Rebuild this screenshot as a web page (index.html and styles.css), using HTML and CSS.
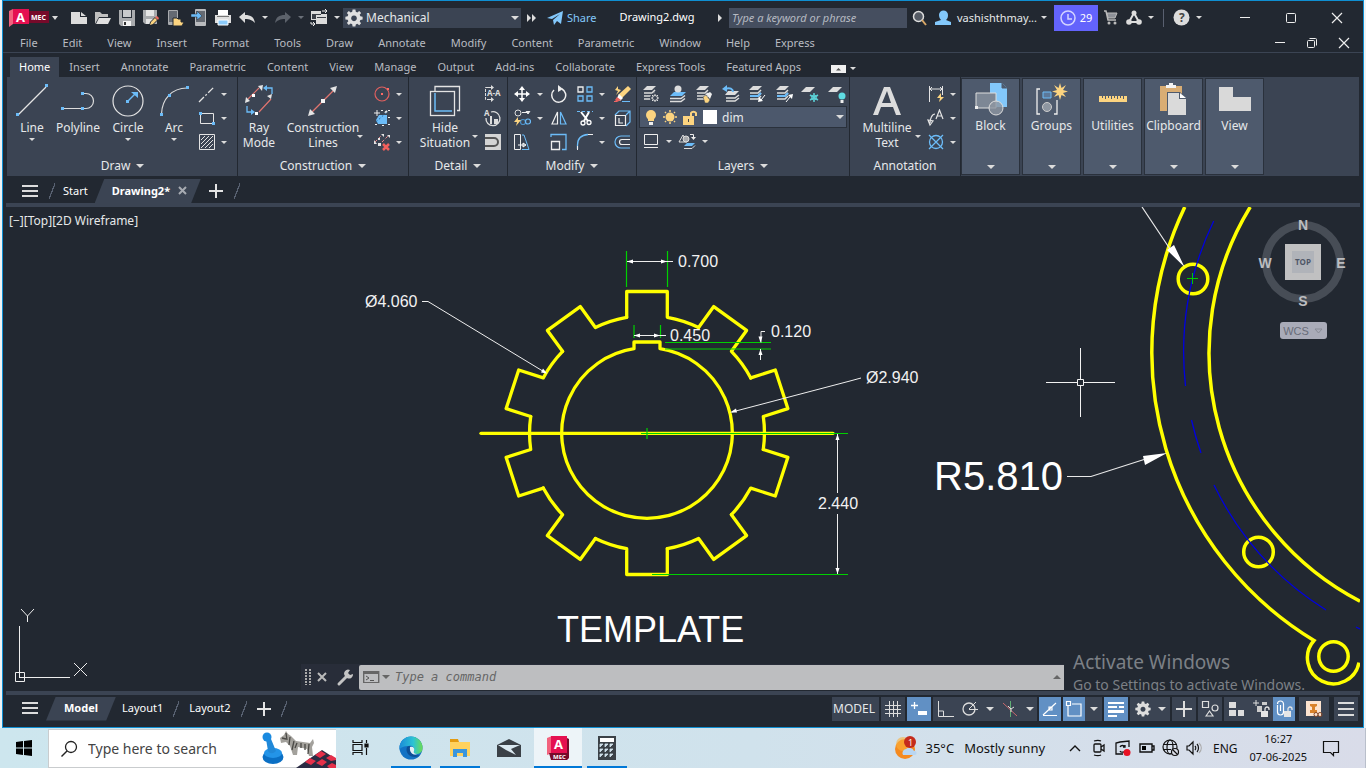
FILE: index.html
```html
<!DOCTYPE html>
<html lang="en">
<head>
<meta charset="utf-8">
<title>Drawing2.dwg</title>
<link rel="stylesheet" href="styles.css">
</head>
<body>
<svg class="defs" aria-hidden="true">
  <defs>
    <path id="tooth" d="M-20.3-115.7V-141.5H20.3V-115.7A117.5 117.5 0 0 1 51.6-105.5"/>
    <g id="stack"><path d="M5 1h9l-4 4H1z" fill="#dcdcdc"/><path d="M2 8h8l3-3M2 11h8l3-3M2 14h8l3-3" fill="none" stroke="#dcdcdc" stroke-width="1.5"/></g>
    <g id="padlock"><path d="M1 5h7v6H1z" fill="#e6e6e6"/><path d="M5 5V3a2 2 0 0 1 4 0v1" fill="none" stroke="#e6e6e6" stroke-width="1.3"/></g>
    <path id="cog" d="M8 0h3l.4 2.4 1.6.7 2-1.5 2 2-1.5 2 .7 1.6 2.4.4v3l-2.4.4-.7 1.6 1.5 2-2 2-2-1.5-1.6.7L11 18H8l-.4-2.4-1.6-.7-2 1.500-2-2 1.500-2-.7-1.600L.4 10.600v-3l2.400-.4.7-1.600-1.500-2 2-2 2 1.500 1.600-.7zM9.500 6.300a3 3 0 1 0 .01 0z" fill-rule="evenodd"/>
  </defs>
</svg>
<div class="desktop">
<main class="window">
  <header class="titlebar">
    <button class="applogo" aria-label="Application menu"><svg width="41" height="20"><path d="M0 3l4-2v15l-4 3z" fill="#f2627d"/><path d="M4 1h16v15H4z" fill="#e51050"/><path d="M20 3h20v12H20z" fill="#770a2a"/><text x="7" y="14" class="logo-a">A</text><text x="22" y="12" class="logo-m">MEC</text></svg></button>
    <span class="caret wide"></span>
    <div class="qat">
      <button aria-label="New"><svg width="18" height="16"><path d="M1 2h9v5h7v7H1z" fill="#dcdcdc"/><path d="M11 2l5 4h-5z" fill="#dcdcdc"/></svg></button>
      <button aria-label="Open"><svg width="18" height="16"><path d="M1 14V2h5l2 2h6v3H5z" fill="#bfbfbf"/><path d="M5 8h12l-3 6H2z" fill="#e0e0e0"/></svg></button>
      <button aria-label="Save"><svg width="18" height="18"><path d="M1 1h16v16H3l-2-2z" fill="#a9abae"/><path d="M4 1h10v8H4z" fill="#2b313a"/><path d="M5 1h8v7H5z" fill="#c9cacc"/><path d="M5 12h8v5H5z" fill="#f3f3f3"/><path d="M6 13h2v3H6z" fill="#333"/></svg></button>
      <button aria-label="Save as"><svg width="18" height="18"><path d="M1 1h14v14H3l-2-2z" fill="#a9abae"/><path d="M4 1h8v6H4zM4 10h7v5H4z" fill="#e5e5e5"/><path d="M7 17l1-4 5-5 3 3-5 5z" fill="#222830"/><path d="M8 16l1-3 4-4 2 2-4 4z" fill="#fcd480"/><path d="M13 8l2-1 2 2-1 2z" fill="#ee6a5f"/></svg></button>
      <button aria-label="Open from mobile"><svg width="18" height="18"><rect x="2" y="1" width="10" height="15" rx="1" fill="#a9abae"/><path d="M3 2h8v11H3z" fill="#656a72"/><path d="M7 17v-8h4l1 1h3v3h3l-2 4z" fill="#fcd480" stroke="#222830"/></svg></button>
      <button aria-label="Save to mobile"><svg width="18" height="18"><rect x="5" y="0" width="11" height="17" rx="1" fill="#b9bbbe"/><path d="M6 2h9v11H6z" fill="#656a72"/><path d="M1 5h6V2l5 5-5 4V8H1z" fill="#6cbcf8" stroke="#222830" stroke-width=".5"/></svg></button>
      <button aria-label="Plot"><svg width="18" height="18"><path d="M4 1h10v5H4z" fill="#fff"/><path d="M1 6h16v8H1z" fill="#dedede"/><path d="M3 7h12v1H3z" fill="#777"/><path d="M4 11h10v5H4z" fill="#8bcbfb" stroke="#fff"/></svg></button>
      <button aria-label="Undo"><svg width="18" height="14"><path d="M1 6l6-5v3c6 0 9 2 10 8-3-3-5-4-10-4v4z" fill="#dcdcdc"/></svg></button><span class="caret slot"></span>
      <button aria-label="Redo"><svg width="18" height="14"><path d="M17 6l-6-5v3C5 4 2 6 1 12c3-3 5-4 10-4v4z" fill="#5c626b"/></svg></button><span class="caret slot dim"></span>
      <button aria-label="Switch windows"><svg width="18" height="18"><path d="M1 2h10v3h6v10H6v-4H1z" fill="#dcdcdc"/><path d="M2 5h9v1H6v4H2zM7 8h9v1H7z" fill="#3b4048"/><path d="M12 2h4M15 0l2 2-2 2M1 13v2h4M3 13l2 2-2 2" fill="none" stroke="#eee"/></svg></button><span class="caret slot last"></span>
    </div>
    <label class="workspace"><svg width="18" height="18" viewBox="0 0 19 18"><use href="#cog" fill="#e0e0e0"/></svg><select aria-label="Workspace"><option>Mechanical</option></select><span class="caret wide"></span></label>
    <svg class="more" width="10" height="10"><path d="M0 1l4 4-4 4zM5 1l4 4-4 4z" fill="#ddd"/></svg>
    <button class="share"><svg width="16" height="14"><path d="M0 7L16 0l-2 13-4-3-3 4-1-5 7-6-8 5z" fill="#83c8fb"/></svg>Share</button>
    <h1 class="doctitle">Drawing2.dwg</h1>
    <div class="tools">
      <svg class="tri" width="5" height="8"><path d="M0 0l4 4-4 4z" fill="#ddd"/></svg>
      <input class="search" type="text" aria-label="Search help" placeholder="Type a keyword or phrase">
      <button class="w26" aria-label="Search"><svg width="16" height="16"><circle cx="6.500" cy="6.500" r="5" fill="#555b65" stroke="#ddd" stroke-width="1.500"/><path d="M10 10l4 5" stroke="#d8a868" stroke-width="2"/></svg></button>
      <button class="user"><svg width="17" height="16"><path d="M4 5a4 4 0 0 1 9 0c0 3-1 4-2 5l5 2v3H0v-3l6-2C5 9 4 7 4 5z" fill="#83c8fb"/></svg>vashishthmay...<span class="caret"></span></button>
      <button class="trial"><svg width="16" height="16"><circle cx="8" cy="8" r="7" fill="none" stroke="#d4d4ff" stroke-width="1.500"/><path d="M8 4v5h4" fill="none" stroke="#d4d4ff" stroke-width="1.500"/></svg>29</button>
      <button class="w26" aria-label="Cart"><svg width="14" height="15"><path d="M0 1h2l2 9h8" fill="none" stroke="#bbb" stroke-width="1.500"/><path d="M3 3h10l-2 5H4z" fill="#8d9198" stroke="#bbb"/><circle cx="5" cy="13" r="1.500" fill="#bbb"/><circle cx="11" cy="13" r="1.500" fill="#bbb"/></svg></button>
      <button class="autodesk" aria-label="Autodesk apps"><svg width="16" height="16"><path d="M8 3L3 12h10z" fill="none" stroke="#ddd" stroke-width="2"/><circle cx="8" cy="3" r="2.500" fill="#ddd"/><circle cx="3" cy="12" r="2.800" fill="#ddd"/><circle cx="13" cy="12" r="2.800" fill="#ddd"/></svg><span class="caret"></span></button>
      <i class="rule"></i>
      <button class="help" aria-label="Help"><svg width="17" height="17"><circle cx="8.500" cy="8.500" r="8" fill="#dcdcdc"/><text x="6" y="13" class="qmark">?</text></svg><span class="caret"></span></button>
      <div class="wincontrols">
        <button aria-label="Minimize"><svg width="12" height="12"><path d="M1 5.500h10" stroke="#eee"/></svg></button>
        <button aria-label="Maximize"><svg width="12" height="12"><rect x="1.500" y="1.500" width="9" height="9" rx="1" fill="none" stroke="#eee"/></svg></button>
        <button aria-label="Close"><svg width="12" height="12"><path d="M1 1l10 10M11 1L1 11" stroke="#eee" stroke-width="1.200"/></svg></button>
      </div>
    </div>
  </header>

  <nav class="menubar">
    <button>File</button><button>Edit</button><button>View</button><button>Insert</button><button>Format</button><button>Tools</button><button>Draw</button><button>Annotate</button><button>Modify</button><button>Content</button><button>Parametric</button><button>Window</button><button>Help</button><button>Express</button>
    <div class="doccontrols">
      <button aria-label="Minimize drawing"><svg width="12" height="12"><path d="M1 5.500h10" stroke="#eee"/></svg></button>
      <button aria-label="Restore drawing"><svg width="12" height="12"><rect x="1.500" y="3.500" width="7" height="7" rx="1" fill="none" stroke="#eee"/><path d="M3.500 1.500h6a1 1 0 0 1 1 1v6" fill="none" stroke="#eee"/></svg></button>
      <button aria-label="Close drawing"><svg width="12" height="12"><path d="M1 1l10 10M11 1L1 11" stroke="#eee" stroke-width="1.200"/></svg></button>
    </div>
  </nav>

  <nav class="ribbontabs">
    <button class="on">Home</button><button>Insert</button><button>Annotate</button><button>Parametric</button><button>Content</button><button>View</button><button>Manage</button><button>Output</button><button>Add-ins</button><button>Collaborate</button><button>Express Tools</button><button>Featured Apps</button>
    <span class="minimize"><svg width="15" height="8"><path d="M0 0h15v8H0z" fill="#f0f0f0"/><path d="M5 5.500h5L7.500 3z" fill="#555"/></svg><span class="caret"></span></span>
  </nav>

  <section class="ribbon">
    <div class="panel draw">
      <div class="body">
        <button class="big w48"><svg width="34" height="34"><path d="M3 31L31 3" stroke="#e4e4e4" stroke-width="1.200"/><path d="M1 29h3v3H1zM30 0h3v3h-3z" fill="#6cbcf8"/></svg>Line<span class="caret"></span></button>
        <button class="big w44"><svg width="34" height="34"><path d="M2 24.500h20M22 9.500h3a7.500 7.500 0 0 1 0 15h-3" fill="none" stroke="#dcdcdc" stroke-width="1.200"/><path d="M0 23h3v3H0zM20 23h3v3h-3zM20 8h3v3h-3z" fill="#6cbcf8"/></svg>Polyline</button>
        <button class="big w56"><svg width="34" height="34"><circle cx="17" cy="17" r="15" fill="none" stroke="#e4e4e4" stroke-width="1.200"/><path d="M17 17l7-7" stroke="#6cbcf8" stroke-width="1.500"/><path d="M15 16h3v3h-3zM20 8h7v6z" fill="#6cbcf8"/></svg>Circle<span class="caret"></span></button>
        <button class="big w36"><svg width="34" height="34"><path d="M4.500 30C5 15 15 4 30 4" fill="none" stroke="#dcdcdc" stroke-width="1.200"/><path d="M3 29h3v3H3zM11 10h3v3h-3zM29 2h3v3h-3z" fill="#6cbcf8"/></svg>Arc<span class="caret"></span></button>
        <div class="grid2 push">
          <button aria-label="Centerline"><svg width="18" height="18"><path d="M1 17L16 2" stroke="#e4e4e4" stroke-width="1.300" stroke-dasharray="7 2 2 2"/></svg></button><span class="caret"></span>
          <button aria-label="Rectangle"><svg width="18" height="18"><path d="M2.500 4.500h13v10h-13z" fill="none" stroke="#e4e4e4"/><path d="M1 3h3v3H1zM14 13h3v3h-3z" fill="#6cbcf8"/></svg></button><span class="caret"></span>
          <button aria-label="Hatch"><svg width="18" height="18"><path d="M1.500 1.500h15v15h-15z" fill="none" stroke="#e4e4e4"/><path d="M3 7l4-4M3 11l8-8M3 15L15 3M7 15l8-8M11 15l4-4" stroke="#e4e4e4"/></svg></button><span class="caret"></span>
        </div>
      </div>
      <div class="name">Draw<span class="caret wide"></span></div>
    </div>

    <div class="panel constr">
      <div class="body">
        <button class="big w44"><svg width="34" height="34"><path d="M6 15L17 4M17 28l12-13" stroke="#e0746f" stroke-width="1.200"/><path d="M3 19l1-6 4 4zM16 2l5-1-1 6zM30 10l-5 2 4 3z" fill="#e4e4e4"/><path d="M10 10h3v3h-3zM13 28h3v3h-3z" fill="#fff"/><path d="M23 4h7v6M5 22v6h6" fill="none" stroke="#6cbcf8" stroke-width="1.300"/><path d="M21 4l4-3v6zM13 28l-4-3v6z" fill="#6cbcf8"/></svg>Ray<br>Mode</button>
        <button class="big w86"><svg width="34" height="34"><path d="M6 28L28 6" stroke="#e0746f" stroke-width="1.300"/><path d="M2 32l2-7 5 5zM31 2l-7 2 5 5z" fill="#e4e4e4"/><path d="M15 15h4v4h-4z" fill="#f4f4f4"/></svg>Construction<br>Lines<span class="caret side"></span></button>
        <div class="grid2">
          <button aria-label="Construction circle"><svg width="18" height="18"><circle cx="9" cy="9" r="7" fill="none" stroke="#e0605f" stroke-width="1.200"/><path d="M8 8h2v2H8zM14 3h2v2h-2z" fill="#ff6a66"/></svg></button><span class="caret"></span>
          <button aria-label="Automatic construction lines"><svg width="18" height="18"><path d="M6 6h8v9H5l-2-4z" fill="#6cbcf8"/><path d="M1 4h6M4 1v6" stroke="#eee"/><path d="M9 1v1M14 2l-2 2M16 1v1M16 8v1M16 15v1M10 17v-1M3 16v-1" stroke="#eee" stroke-width="2"/><path d="M3 13L15 2" stroke="#2b6fa8" stroke-dasharray="2 2"/></svg></button><span class="caret"></span>
          <button aria-label="Delete construction lines"><svg width="18" height="18"><path d="M2 9l8-8M9 9l6-6" stroke="#e88" stroke-dasharray="3 2"/><path d="M1 7v4h3zM8 1h3v3zM14 2h3v3zM5 10h3v3H5zM5 5h2v2H5z" fill="#e4e4e4"/><path d="M10 11l6 6M16 11l-6 6" stroke="#f2605c" stroke-width="2.500"/></svg></button><span class="caret"></span>
        </div>
      </div>
      <div class="name">Construction<span class="caret wide"></span></div>
    </div>

    <div class="panel detail">
      <div class="body">
        <button class="big w72"><svg width="34" height="34"><path d="M7 7V2.500h24.500v24H29" fill="none" stroke="#e4e4e4" stroke-width="1.300"/><rect x="2.500" y="7.500" width="24" height="24" fill="none" stroke="#e4e4e4" stroke-width="1.300"/><path d="M7 9v18h17" fill="none" stroke="#6cbcf8" stroke-width="1.500"/></svg>Hide<br>Situation<span class="caret side"></span></button>
        <div class="grid1">
          <button aria-label="Detail view"><svg width="20" height="18"><path d="M5 2.500H2.500v12H5" fill="none" stroke="#ddd" stroke-dasharray="3 1"/><path d="M5 2.500h4M5 14.500h4" stroke="#ddd"/><path d="M8 0v5l3-2.500zM8 12v5l3-2.500z" fill="#ddd"/><text x="4" y="11" class="tiny">A-A</text></svg></button>
          <button aria-label="Scale area"><svg width="20" height="20"><path d="M8 4a7 7 0 1 1-5 6" fill="none" stroke="#ddd" stroke-width="1.300"/><text x="1" y="8" class="tiny">A</text><path d="M7 8h2v8H7zM11 11h4v5h-4z" fill="#ddd"/></svg></button>
          <button aria-label="Section"><svg width="18" height="18"><path d="M1 1h16v16H1z" fill="#d4d4d4"/><path d="M1 5h9a4 4 0 0 1 0 8H1" fill="none" stroke="#555" stroke-width="2"/></svg></button>
        </div>
      </div>
      <div class="name">Detail<span class="caret wide"></span></div>
    </div>

    <div class="panel modify">
      <div class="body">
        <div class="grid6">
          <button aria-label="Move"><svg width="18" height="18"><path d="M9 3v12M3 9h12" stroke="#fff" stroke-width="1.500"/><path d="M9 1l3 4H6zM9 17l3-4H6zM1 9l4-3v6zM17 9l-4-3v6z" fill="#fff"/></svg></button><span class="caret"></span>
          <button aria-label="Rotate"><svg width="18" height="18"><path d="M12 4a7 7 0 1 1-8 1" fill="none" stroke="#eee" stroke-width="1.500"/><path d="M8 0l5 4-5 3z" fill="#eee"/></svg></button>
          <button aria-label="Array"><svg width="18" height="18" fill="none" stroke-width="1.300"><path d="M2 2h5v5H2z" stroke="#eee"/><path d="M11 2h5v5h-5zM2 11h5v5H2zM11 11h5v5h-5z" stroke="#6cbcf8"/></svg></button><span class="caret"></span>
          <button aria-label="Erase"><svg width="18" height="18"><path d="M15 1l3 3-9 9-4-3z" fill="#fcd480"/><path d="M6 9l4 4-3 3-3-3z" fill="#fff"/><path d="M4 12l4 3-4 2-2-2z" fill="#e8615c"/><path d="M5 1L2 5l3 1-2 4 5-5-3-1z" fill="#fcd480"/><path d="M1 16.500h3" stroke="#e66"/><path d="M9 16.500h8" stroke="#6cbcf8"/></svg></button>
          <button aria-label="Copy"><svg width="18" height="18"><circle cx="5" cy="4" r="3" fill="none" stroke="#ddd"/><path d="M9 3.500h5M13 2l2 3 2-3" stroke="#eee" fill="#eee"/><circle cx="10" cy="13" r="2.500" fill="none" stroke="#4b90c8" stroke-width="1.200"/><circle cx="15" cy="12.500" r="2.500" fill="none" stroke="#6cbcf8" stroke-width="1.200"/><path d="M5 8l-4 5h3l-1 4 5-6H5z" fill="#fcd480"/></svg></button><span class="caret"></span>
          <button aria-label="Mirror"><svg width="18" height="18" fill="none"><path d="M7.500 3v12H2z" stroke="#eee" stroke-width="1.200"/><path d="M10.500 3v12H16z" stroke="#6cbcf8" stroke-width="1.200"/></svg></button>
          <button aria-label="Trim"><svg width="18" height="18"><path d="M1 2.500h16" stroke="#6cbcf8" stroke-dasharray="3 2"/><path d="M5 3l7 9M13 3l-5 9" stroke="#fff" stroke-width="2"/><circle cx="7" cy="14" r="2" fill="none" stroke="#fff" stroke-width="1.300"/><circle cx="13" cy="13.500" r="2" fill="none" stroke="#fff" stroke-width="1.300"/></svg></button><span class="caret"></span>
          <button aria-label="Stretch solid"><svg width="18" height="18" fill="none" stroke-width="1.200"><path d="M2 6l4-4h11v11l-4 4M13 6l4-4" stroke="#6cbcf8"/><path d="M2.500 6.500h10v10h-10zM6 9v5h4" stroke="#eee"/></svg></button>
          <button aria-label="Stretch"><svg width="18" height="18" fill="none"><path d="M1.500 1.500h6v15h-6z" stroke="#eee"/><path d="M9 2h2l5 14.500H9" stroke="#6cbcf8"/><path d="M5 12h7M10 10l3 2-3 2z" stroke="#fff"/></svg></button><span></span>
          <button aria-label="Scale"><svg width="18" height="18" fill="none" stroke-width="1.300"><path d="M1 4V1.500h15v15h-4" stroke="#6cbcf8"/><path d="M1.500 8.500h8v8h-8z" stroke="#eee"/></svg></button>
          <button aria-label="Fillet"><svg width="18" height="18" fill="none"><path d="M1.500 16V12C1.500 6 5 2 12 1.500" stroke="#6cbcf8" stroke-width="1.300"/><path d="M12 1.500h5M1.500 13v4" stroke="#eee"/></svg></button><span class="caret"></span>
          <button aria-label="Offset"><svg width="18" height="18" fill="none" stroke-width="1.200"><path d="M17 3H8a6 6 0 0 0 0 12h9" stroke="#6cbcf8"/><path d="M17 6.500H9a2.500 2.500 0 0 0 0 5h8" stroke="#eee"/></svg></button>
        </div>
      </div>
      <div class="name">Modify<span class="caret wide"></span></div>
    </div>

    <div class="panel layers">
      <div class="body">
        <div class="layerstack">
          <div class="layerrow">
            <button aria-label="Layer properties"><svg width="18" height="18"><use href="#stack"/><circle cx="13" cy="13" r="5" fill="#3b4453"/><circle cx="13" cy="13" r="2.500" fill="none" stroke="#ddd"/><path d="M13 9v1M13 16v1M9 13h1M16 13h1M10 10l1 1M15 15l1 1M16 10l-1 1M10 16l1-1" stroke="#ddd"/></svg></button>
            <button aria-label="Move to layer"><svg width="18" height="18"><path d="M5 7h12l-4 4H1z" fill="#6cbcf8"/><circle cx="9" cy="4" r="3.500" fill="#ddd"/><path d="M1 13.500h11l4-3M1 16.500h11l4-3" fill="none" stroke="#ddd" stroke-width="1.500"/></svg></button>
            <button aria-label="Match layer"><svg width="18" height="18"><use href="#stack"/><path d="M8 12l3-2 4 5-2 3h-3z" fill="#fcd480" stroke="#3b4453" stroke-width=".5"/><path d="M11 9l4-2 2 2-2 5z" fill="#eee"/></svg></button>
            <button aria-label="Previous layer"><svg width="18" height="18"><path d="M6 6h11l-4 4H3z" fill="#ddd"/><path d="M4 13h9l4-3M4 16h9l4-3" fill="none" stroke="#ddd" stroke-width="1.500"/><path d="M3 4c5-2 8 0 8 3" fill="none" stroke="#6cbcf8" stroke-width="2"/><path d="M0 4l5-4v7z" fill="#6cbcf8"/></svg></button>
            <button aria-label="Isolate layer"><svg width="18" height="18"><use href="#stack"/><path d="M2 11h8l3-3" fill="none" stroke="#6cbcf8" stroke-width="2"/><path d="M17 10l-4 5" stroke="#fff"/><path d="M10 17l1-5 4 4z" fill="#fff"/></svg></button>
            <button aria-label="Unisolate layer"><svg width="18" height="18"><use href="#stack"/><path d="M2 11h8l3-3" fill="none" stroke="#6cbcf8" stroke-width="2"/><path d="M11 17l4-5" stroke="#fff"/><path d="M18 9l-1 5-4-4z" fill="#fff"/></svg></button>
            <button aria-label="Freeze layer"><svg width="18" height="18"><path d="M5 2h9l-5 5H0z" fill="#ddd"/><path d="M13 8v9M9 10l8 5M17 10l-8 5" stroke="#5bd0d6" stroke-width="1.500"/><circle cx="13" cy="12.500" r="2.500" fill="none" stroke="#5bd0d6"/></svg></button>
            <button aria-label="Turn off layer"><svg width="18" height="18"><path d="M5 2h9l-5 5H0z" fill="#ddd"/><circle cx="14" cy="11" r="3.500" fill="#5fdce2"/><path d="M12.500 15h3v3h-3z" fill="#eee"/></svg></button>
          </div>
          <div class="layerbox">
            <svg width="14" height="18"><circle cx="7" cy="7" r="5" fill="#fcd480"/><path d="M4 10h6v3H4z" fill="#fcd480"/><path d="M5 14h4v3H5z" fill="#eee"/></svg>
            <svg width="16" height="18"><circle cx="8" cy="9" r="4.500" fill="#fcd480"/><path d="M8 2v2M8 14v2M1 9h2M13 9h2M3 4l1 1M12 13l1 1M13 4l-1 1M3 14l1-1" stroke="#fcd480" stroke-width="1.500"/></svg>
            <svg width="16" height="18"><path d="M1 8h11v9H1z" fill="#fcd480"/><path d="M9 8V5a3 3 0 0 1 5 0v3" fill="none" stroke="#fcd480" stroke-width="2"/><path d="M6 11h1v3H6z" fill="#444"/></svg>
            <i class="swatch"></i>
            <select aria-label="Current layer"><option>dim</option></select><span class="caret wide"></span>
          </div>
          <div class="layerrow short">
            <button aria-label="Layer group"><svg width="18" height="18" fill="none" stroke="#eee"><path d="M2.500 2.500h13v10h-13zM2 15.500h14"/></svg></button><span class="caret"></span>
            <button aria-label="Layer conversion"><svg width="18" height="18"><path d="M5 3l4 7H1z" fill="none" stroke="#ddd"/><circle cx="8" cy="7" r="3" fill="#a9abae" stroke="#ddd"/><path d="M12 2.500h3.500V6" stroke="#eee" fill="none"/><path d="M13 5h5l-2.500 3z" fill="#eee"/><path d="M9 11h8l-3 3H6z" fill="#6cbcf8"/><path d="M6 16.500h8l3-3" fill="none" stroke="#ddd"/></svg></button><span class="caret"></span>
          </div>
        </div>
      </div>
      <div class="name">Layers<span class="caret wide"></span></div>
    </div>

    <div class="panel annot">
      <div class="body">
        <button class="big w74"><svg width="34" height="34"><path d="M14 3h6l11 28h-5l-3-8H11l-3 8H3zM17 7l-5 12h9z" fill="#dcdcdc" fill-rule="evenodd"/></svg>Multiline<br>Text<span class="caret side"></span></button>
        <div class="grid2">
          <button aria-label="Dimension"><svg width="18" height="18"><path d="M2.500 1v16M15.500 1v9M3 4h12M5 2L3 4l2 2M13 2l2 2-2 2" fill="none" stroke="#e4e4e4"/><path d="M14 8l-4 5h3l-1 4 5-5h-3z" fill="#fcd480"/></svg></button><span class="caret"></span>
          <button aria-label="Leader"><svg width="18" height="18" fill="none" stroke="#e4e4e4" stroke-width="1.200"><path d="M3 14c0-4 2-9 5-9M1 11l2 5 3-4z"/><path d="M9 10l3.500-9L16 10M10.500 7h4"/></svg></button><span class="caret"></span>
          <button aria-label="Centre mark"><svg width="18" height="18" fill="none" stroke="#6cbcf8" stroke-width="1.300"><circle cx="9" cy="9" r="6.500"/><path d="M2 2l14 14M16 2L2 16"/></svg></button><span class="caret"></span>
        </div>
      </div>
      <div class="name">Annotation</div>
    </div>

    <button class="fold"><svg width="36" height="36"><path d="M17 2h12l5 5v19H17z" fill="#83c8fb"/><path d="M29 2v5h5" fill="#4e5a6d" stroke="#4e5a6d"/><path d="M3 12h20v15H3z" fill="#7d8795" stroke="#ddd"/><circle cx="23" cy="27" r="7" fill="#8e96a1" fill-opacity=".8" stroke="#ddd"/><path d="M2 25h3v3H2z" fill="#eee"/></svg>Block<span class="caret wide"></span></button>
    <button class="fold"><svg width="36" height="36"><path d="M6 8H3v25h3M20 33h3V19" fill="none" stroke="#eee" stroke-width="1.300"/><path d="M9 11h8v6H9z" fill="#5c7899" stroke="#6cbcf8"/><circle cx="13" cy="26" r="4.500" fill="#8e96a1" stroke="#ccc"/><path d="M26 2l1.500 5 4.500-3-3 5 5 1.500-5 1.500 3 4-4.500-2-1.500 5-1.500-5-4.500 2 3-4-5-1.500 5-1.500-3-5 4.500 3z" fill="#fcd480"/></svg>Groups<span class="caret wide"></span></button>
    <button class="fold"><svg width="36" height="36"><path d="M4 15h28v6H4z" fill="#fcd480"/><path d="M7.500 15v2M10.500 15v3M13.500 15v2M16.500 15v3M19.500 15v2M22.500 15v3M25.500 15v2M28.500 15v3" stroke="#4e5a6d"/></svg>Utilities<span class="caret wide"></span></button>
    <button class="fold"><svg width="36" height="36"><path d="M4 5h22v25H4z" fill="#d9ad74"/><path d="M10 4h3V2h4v2h3v3H10z" fill="#f3f3f3"/><path d="M11 11h13l7 7v17H11z" fill="#4e5a6d"/><path d="M12 12h11v6h7v16H12z" fill="#dadada"/><path d="M24 12l6 5h-6z" fill="#fff"/></svg>Clipboard<span class="caret wide"></span></button>
    <button class="fold"><svg width="36" height="36"><path d="M2 6h14v10h18v14H2z" fill="#d9d9d9"/></svg>View<span class="caret wide"></span></button>
  </section>

  <nav class="filetabs">
    <button class="burger" aria-label="Tabs menu"><i></i><i></i><i></i></button>
    <i class="slash"></i>
    <button class="ftab">Start</button>
    <div class="ftab on"><button>Drawing2*</button><button aria-label="Close tab"><svg width="9" height="9"><path d="M1 1l7 7M8 1L1 8" stroke="#a7abb2" stroke-width="2"/></svg></button></div>
    <button class="plus" aria-label="New tab"></button>
    <i class="slash"></i>
  </nav>
  <div class="strip"></div>

  <section class="canvas">
    <svg class="drawing" width="100%" height="100%">
      <g transform="translate(-6,-207)" fill="none">
        <g stroke="#ff0" stroke-width="3.500">
          <path d="M1250.200 207A279.500 279.500 0 0 0 1360 601.200"/>
          <path d="M1184.800 207A337 337 0 0 0 1314 640.500A26 26 0 1 0 1359 662.500"/>
          <circle cx="1193" cy="279" r="14.800"/><circle cx="1258.500" cy="552" r="14.800"/><circle cx="1333.500" cy="656.500" r="14.700"/>
        </g>
        <g stroke="#0000e0" stroke-width="1.300">
          <path d="M1213.700 221A304.500 304.500 0 0 0 1185.500 386M1191.500 420A304.500 304.500 0 0 0 1201 453M1214 485A304.500 304.500 0 0 0 1326 610M1356 627l4 2"/>
        </g>
        <path d="M1187 278.500h11M1192.500 273v11" stroke="#0c0"/>
        <path d="M1142 207l28 42M1067 476.500h24l53-17" stroke="#e8e8e8" stroke-width="1.200"/>
        <path d="M1184.500 267l-17.500-17 7-5zM1167 453l-24 3 2 9z" fill="#fff"/>
        <g transform="translate(647,433)" stroke="#ff0" stroke-width="3.300" stroke-linejoin="round" stroke-linecap="round">
          <use href="#tooth"/><use href="#tooth" transform="rotate(36)"/><use href="#tooth" transform="rotate(72)"/><use href="#tooth" transform="rotate(108)"/><use href="#tooth" transform="rotate(144)"/><use href="#tooth" transform="rotate(180)"/><use href="#tooth" transform="rotate(216)"/><use href="#tooth" transform="rotate(252)"/><use href="#tooth" transform="rotate(288)"/><use href="#tooth" transform="rotate(324)"/>
          <path d="M-13-84.300V-91H13V-84.300A85.300 85.300 0 1 1-13-84.300"/>
          <path d="M-166 .3H186"/>
        </g>
        <path d="M626.500 251v36M667.500 251v36M634 325v13M660.500 325v13M665 342.500h106M665 349h106M641 433.500h207M647 428v11M652 574.500h196" stroke="#00d000" stroke-width="1.200"/>
        <g stroke="#eee">
          <path d="M627 261.500h46M634 335.500h32M765 331.500h-4v11M760.500 349v11M837.500 434v59M837.500 514v60M732 412l118-31 11-3M422 301.500h6L546 373"/>
        </g>
        <path d="M627 261.500l6-2v4zM667 261.500l-6-2v4zM634 335.500l6-2v4zM660 335.500l-6-2v4zM760.500 342.500l-2-6h4zM760.500 349l-2 6h4zM837.500 434l-2 6h4zM837.500 574l-2-6h4zM730 412.500l6-4 1 4zM547 373.500l-6-1 2-4z" fill="#fff"/>
        <path d="M1046 382.500h31M1084 382.500h31M1080.500 348v31M1080.500 386v31M1077.500 379.500h6v6h-6z" stroke="#f2f2f2"/>
        <path d="M19.500 626v52M19.500 677.500H70M15.500 672.500h9v9h-9zM74 663l13 13M87 663l-13 13M21 609l6.500 7 6.500-7M27.500 616v6" stroke="#eee"/>
        <g class="dims">
          <text x="678" y="267">0.700</text><text x="670" y="341">0.450</text><text x="771" y="337">0.120</text><text x="866" y="383">Ø2.940</text><text x="365" y="307">Ø4.060</text><text x="818" y="509">2.440</text>
          <text x="934" y="490" class="radius">R5.810</text><text x="557" y="642" class="caption">TEMPLATE</text>
        </g>
      </g>
    </svg>
    <div class="viewlabel"><button>[−]</button><button>[Top]</button><button>[2D Wireframe]</button></div>
    <div class="viewcube">
      <svg width="92" height="92"><circle cx="46" cy="46" r="37" fill="none" stroke="#474d56" stroke-width="8"/><path d="M28 28h36v36H28z" fill="#c0c0c1"/><path d="M35 35h22v22H35z" fill="#b0b3b9"/><g class="compass"><text x="46" y="14">N</text><text x="46" y="90">S</text><text x="8" y="52">W</text><text x="84" y="52">E</text></g><text x="46" y="49" class="cubetext">TOP</text></svg>
      <button class="wcs">WCS<svg width="9" height="6"><path d="M1 1h7L4.500 5z" fill="none" stroke="#888b96"/></svg></button>
    </div>
    <div class="watermark"><p class="wm1">Activate Windows</p><p class="wm2">Go to Settings to activate Windows.</p></div>
    <div class="cmdline">
      <svg width="58" height="26"><path d="M5 5v16M9 5v16" stroke="#aaa" stroke-width="2" stroke-dasharray="2 1"/><path d="M17 9l8 8M25 9l-8 8" stroke="#bbb" stroke-width="2"/><path d="M38 20l8-8" stroke="#c4c4c4" stroke-width="3" stroke-linecap="round"/><path d="M44 12a4 4 0 0 1 5-6l-2 3 2 2 3-1a4 4 0 0 1-6 4z" fill="#c4c4c4"/></svg>
      <div class="cmdbox"><svg width="28" height="12"><path d="M.7.700h15v11h-15z" fill="none" stroke="#666" stroke-width="1.400"/><path d="M1 2h15" stroke="#666" stroke-width="2"/><path d="M3 5l3 2-3 2M7 9.500h4" fill="none" stroke="#555"/><path d="M19 4h8l-4 4z" fill="#666"/></svg><input type="text" aria-label="Command" placeholder="Type a command"><svg width="8" height="5"><path d="M0 4h8L4 0z" fill="#666"/></svg></div>
    </div>
  </section>
  <div class="strip thin"></div>

  <footer class="layoutbar">
    <button class="burger" aria-label="Layouts menu"><i></i><i></i><i></i></button>
    <div class="ltab on"><button>Model</button></div>
    <button class="ltab">Layout1</button><i class="slash"></i><button class="ltab">Layout2</button><i class="slash"></i>
    <button class="plus" aria-label="New layout"></button><i class="slash"></i>
    <div class="status">
      <button class="model">MODEL</button>
      <button class="s24" aria-label="Grid"><svg width="18" height="18"><path d="M5.500 1v16M9.500 1v16M13.500 1v16M1 5.500h16M1 9.500h16M1 13.500h16" stroke="#ddd"/></svg></button>
      <button class="s24 lit" aria-label="Dynamic input"><svg width="18" height="18"><path d="M4.500 2v7M1 5.500h7" stroke="#fff" stroke-width="1.300"/><path d="M8 11h9v4H8z" fill="#fff"/></svg></button>
      <div class="run">
        <button aria-label="Ortho"><svg width="18" height="18"><path d="M2.500 1v15.500H18M2.500 11h5v5" fill="none" stroke="#ddd"/></svg></button>
        <button aria-label="Polar"><svg width="18" height="18"><circle cx="8" cy="9" r="6" fill="none" stroke="#ddd" stroke-width="1.300"/><path d="M8 9.500h9M8 9l7-7" stroke="#ddd"/></svg></button><span class="caret wide"></span>
        <button aria-label="Isodraft"><svg width="18" height="18"><path d="M9.500 1v16" stroke="#5fae74"/><path d="M2 3l14 13" stroke="#c9686c"/><path d="M7 6l3 3v3M10 9l3-2" fill="none" stroke="#ddd"/></svg></button><span class="caret wide"></span>
      </div>
      <button class="s22 lit" aria-label="Object snap tracking"><svg width="18" height="18"><path d="M2 15L15 3M2 15.500h14M8 7h3v3H8z" stroke="#fff" fill="none" stroke-width="1.200"/></svg></button>
      <button class="s22 lit" aria-label="Object snap"><svg width="18" height="18"><path d="M3 6v10h13V4H7M1.500 1.500h4v4h-4z" stroke="#fff" fill="none" stroke-width="1.200"/></svg></button><span class="s17"><span class="caret wide"></span></span>
      <button class="s24 lit" aria-label="Lineweight"><svg width="18" height="18"><path d="M1 3h16M1 7h9M12 7h5" stroke="#fff" stroke-width="2"/><path d="M1 11.500h16" stroke="#fff" stroke-width="3"/><path d="M1 16h9" stroke="#fff" stroke-width="2"/></svg></button>
      <button class="s40" aria-label="Workspace settings"><svg width="16" height="16" viewBox="0 0 19 18"><use href="#cog" fill="#ddd"/></svg><span class="caret wide"></span></button>
      <button class="s24" aria-label="Annotation monitor"><svg width="18" height="18"><path d="M9 1v16M1 9h16" stroke="#ddd" stroke-width="2"/></svg></button>
      <button class="s24" aria-label="Structure"><svg width="18" height="18" fill="none" stroke="#ddd" stroke-width="1.200"><path d="M1.500 1.500h6v6h-6zM5 16l3.500-5 3.500 5z"/><circle cx="14" cy="8" r="3"/></svg></button>
      <div class="run tight">
        <button aria-label="Power dimension"><svg width="18" height="18" fill="#ddd"><path d="M2 2h7v6H2zM2 10h7v6H2zM11 10h6v6h-6z"/></svg></button>
        <button aria-label="Part reference"><svg width="18" height="18"><path d="M4 0v6M1 3h6" stroke="#ddd"/><path d="M5 6h5v6H5zM10 2h5v3h-5z" fill="#ccc"/><use href="#padlock" x="8" y="6"/></svg></button>
      </div>
      <button class="s22 lit flush" aria-label="Lock"><svg width="18" height="18"><path d="M2.500 5v7a3 3 0 0 0 6 0V4a3 3 0 0 0-6 0M5.500 11V5" fill="none" stroke="#fff" stroke-width="1.200"/><use href="#padlock" x="8" y="6"/></svg></button>
      <button class="s30" aria-label="Isolate"><svg width="18" height="18"><path d="M1 1h15v15H1z" fill="#fde3cf"/><path d="M5 4h7v2l-2 1v3h2v3H5v-3h2V7L5 6z" fill="#d9822b"/><circle cx="11" cy="14.500" r="2" fill="none" stroke="#8a4b2b"/><circle cx="15" cy="14.500" r="2" fill="none" stroke="#8a4b2b"/></svg></button>
      <button class="s24 burger2" aria-label="Customization"><i></i><i></i><i></i></button>
    </div>
  </footer>
</main>
</div>

<footer class="taskbar">
  <button class="start" aria-label="Start"><svg width="16" height="16"><path d="M0 2l7-1v6.500H0zM8 1l8-1v7.500H8zM0 8.500h7V15l-7-1zM8 8.500h8V16l-8-1z"/></svg></button>
  <label class="winsearch"><svg width="18" height="18"><circle cx="11" cy="7" r="5.500" fill="none" stroke="#222" stroke-width="1.300"/><path d="M7 11l-5.500 5.500" stroke="#222" stroke-width="1.500"/></svg><input type="text" aria-label="Search" placeholder="Type here to search">
    <svg class="toys" width="74" height="38"><path d="M34 38L60 20l14 9v9z" fill="#2b2c44"/><path d="M43 32l5-4 6 3-5 4zM53 25l6-4 5 3-6 4zM54 33l6-4 5 3-5 4zM64 28l5-3 5 3v2l-5 1zM65 36l5-3 4 2v3h-7z" fill="#e5304a"/><ellipse cx="11" cy="27" rx="10.500" ry="7" fill="#0a6fc4"/><ellipse cx="11" cy="23" rx="9" ry="5" fill="#2394e8"/><path d="M4 9h5l5 12c-3 3-6 3-8 0z" fill="#2088d8"/><circle cx="5" cy="7" r="4.500" fill="#1a8ae0"/><path d="M18 8l4-3 2-4 2 3 3 2 5 5 14 2 3-4 1 4-2 4 1 9h-4l-2-7-9-2-1 8h-4l-3-9-4-4-5 1z" fill="#a3a19c"/><path d="M24 3l1 7M28 7l-1 8M32 11l-2 9M35 13l-2 5M39 13v5M43 14v6M47 14l-1 10M20 8l4 1" stroke="#4a4946" stroke-width="1.300"/></svg></label>
  <div class="apps">
    <button aria-label="Task view"><svg width="18" height="18" fill="none" stroke="#111" stroke-width="1.200"><path d="M2 1v2.500h9V1M2 16v-2.500h9V16M2 5.500h9v6H2zM15.500 1v3M15.500 9v7"/><path d="M14 5h3v3h-3z" fill="#111"/></svg></button>
    <button class="open" aria-label="Edge"><svg width="24" height="24"><defs><linearGradient id="eg" x1="0" x2="1"><stop offset="0" stop-color="#1b8bd8"/><stop offset=".6" stop-color="#2cc3d4"/><stop offset="1" stop-color="#6bdc52"/></linearGradient></defs><circle cx="12" cy="12" r="11.500" fill="#1372c4"/><path d="M.5 12a11.500 11.500 0 0 1 23 0c0 4-3 6-6 6-2 0-4-1-3-3 2-4-2-6-5-5-4 0-8 1-9 4z" fill="url(#eg)"/><path d="M8 11c-2 5 2 10 8 10 2 0 4-1 5-2-4 1-10-1-9-6 1-3-2-4-4-2z" fill="#0c4f96"/><path d="M11 11c3-1 5 1 4 4-1 2 1 3 3 3-3 2-8-1-7-7z" fill="#e3eef4"/></svg></button>
    <button class="open" aria-label="File Explorer"><svg width="22" height="20"><path d="M1 1h8l1 3H1z" fill="#e39b10"/><path d="M1 4h20v14H1z" fill="#ffd25e"/><path d="M4 11h14v8h-4v-4H8v4H4z" fill="#3a96dd"/></svg></button>
    <button aria-label="Mail"><svg width="24" height="20"><path d="M0 7l12-6 12 6v12H0z" fill="#3b4147"/><path d="M1 7h22l-9 4 5 6-10-5z" fill="#dceaf1"/></svg></button>
    <button class="open active" aria-label="AutoCAD"><svg width="24" height="24"><path d="M1 2l5-2v17l-5 2z" fill="#f2627d"/><path d="M3 17h18V2l2 1v19l-2 2H5z" fill="#770a2a"/><path d="M5 0h16v17H5z" fill="#e51050"/><text x="8" y="13" class="logo-big">A</text><text x="7" y="23" class="logo-s">MEC</text></svg></button>
    <button class="open" aria-label="Calculator"><svg width="18" height="24"><path d="M0 0h18v24H0z" fill="#3b4147"/><path d="M2 2h14v4H2z" fill="#fff"/><path d="M2 8h3l-3 3zM7 8h3l-3 3zM12 8h3l-3 3zM2 13h3l-3 3zM7 13h3l-3 3zM12 13h3l-3 3zM2 18h3l-3 3zM7 18h3l-3 3zM12 18h3l-3 3z" fill="#cfe0ea" stroke="#cfe0ea" stroke-width=".8"/></svg></button>
  </div>
  <div class="tray">
    <button class="weather"><svg width="24" height="24"><circle cx="11" cy="13" r="10" fill="#f58a1f"/><circle cx="9" cy="8" r="7" fill="#fbb03b" opacity=".6"/><path d="M9 19a4 4 0 0 1 3-6 5 5 0 0 1 8 2 2 2 0 0 1 1 4z" fill="#b9d6f2"/><circle cx="16" cy="6" r="6" fill="#c42b1c"/><text x="14" y="10" class="badge">1</text></svg><span>35°C</span><span>Mostly sunny</span></button>
    <button aria-label="Show hidden icons"><svg width="14" height="14"><path d="M2 10l5-5 5 5" fill="none" stroke="#111" stroke-width="1.400"/></svg></button>
    <button aria-label="Meet now"><svg width="16" height="18" fill="none" stroke="#111" stroke-width="1.300"><rect x="3" y="5" width="7" height="8" rx="1"/><path d="M10 8l3-2v6l-3-2M3 2c3-1 5-1 7 0M3 16c3 1 5 1 7 0"/></svg></button>
    <button aria-label="Sync"><svg width="18" height="18" fill="none" stroke="#111" stroke-width="1.300"><path d="M15 8V2l-9 1-4 1v11h7M6 8c1-2 4-2 5 0M11 6v2H9M6 12c1 2 3 1 4 1"/><circle cx="13" cy="13.500" r="3.500" fill="#e81123" stroke="none"/></svg></button>
    <button aria-label="Battery"><svg width="16" height="12"><path d="M1 2h12v8H1zM13 4h2v4h-2" fill="none" stroke="#111" stroke-width="1.400"/><path d="M3 4h4v4H3z"/></svg></button>
    <button aria-label="Network"><svg width="18" height="18" fill="none" stroke="#111" stroke-width="1.200"><circle cx="8" cy="8" r="7"/><ellipse cx="8" cy="8" rx="3" ry="7"/><path d="M1 5.500h14M1 10.500h8"/><circle cx="13" cy="13" r="3.500" fill="#dcdfe9"/><path d="M10.500 10.500l5 5"/></svg></button>
    <button aria-label="Volume"><svg width="18" height="16" fill="none" stroke="#111" stroke-width="1.200"><path d="M1 6h2l4-4v12l-4-4H1zM9 6c1 1 1 3 0 4M11 4c2 2 2 6 0 8"/><path d="M13 3c3 3 3 7 0 10" stroke="#aaa"/></svg></button>
    <span class="lang">ENG</span>
    <time class="clock">16:27<br>07-06-2025</time>
    <button class="notes" aria-label="Notifications"><svg width="18" height="18"><path d="M1.500 2.500h15v11h-5v3l-3-3h-7z" fill="none" stroke="#111" stroke-width="1.200"/></svg></button>
  </div>
</footer>
</body>
</html>
```
FILE: styles.css
```css
* { box-sizing: border-box; }
html, body { height: 100%; }
body {
  margin: 0;
  display: flex;
  flex-direction: column;
  overflow: hidden;
  font-family: "Noto Sans", "Open Sans", sans-serif;
  font-size: 11px;
  color: #e6e8ea;
  background: #222830;
}
button, input, select {
  font: inherit;
  color: inherit;
  background: none;
  border: 0;
  padding: 0;
  margin: 0;
  outline: 0;
  border-radius: 0;
}
button { display: flex; align-items: center; justify-content: center; white-space: nowrap; }
select { appearance: none; flex: 1; min-width: 0; }
svg { display: block; flex: none; }
.defs { position: absolute; width: 0; height: 0; }

.desktop { flex: 1; min-height: 0; display: flex; padding: 0 2px; background: #eef3f5; }
.window {
  flex: 1;
  min-width: 0;
  display: flex;
  flex-direction: column;
  background: #222831;
  border: 1px solid #0f8fd2;
}
.caret {
  flex: none;
  width: 0;
  height: 0;
  border: 3px solid transparent;
  border-top-color: #dcdcdc;
  border-bottom: 0;
}
.caret.wide { border-width: 4px 4px 0; }
.caret.dim { border-top-color: #6a7079; }

/* title bar */
.titlebar { flex: none; display: flex; align-items: center; height: 33px; }
.applogo { margin-left: 6px; }
.applogo + .caret { margin: 0 9px 0 2px; border-width: 4px 3px 0; }
.logo-a { font: bold 13px "Open Sans", sans-serif; fill: #fff; }
.logo-m { font: bold 7px "Open Sans", sans-serif; fill: #fff; }
.qat { display: flex; align-items: center; }
.qat button { width: 24px; height: 24px; }
.caret.slot { margin: 0 3px; }
.caret.last { margin-right: 3px; }
.workspace { display: flex; align-items: center; gap: 3px; width: 178px; height: 20px; padding: 0 2px; background: #3b4453; font-size: 12px; }
.more { margin-left: 6px; }
.share { gap: 4px; margin-left: 10px; color: #83c8fb; }
.doctitle { flex: 1; margin: 0 0 3px 23px; font-size: 11px; font-weight: 400; color: #fff; white-space: nowrap; }
.tools { display: flex; align-items: center; }
.tri { margin-right: 6px; }
.search { width: 178px; height: 20px; padding: 0 3px; background: #454e5f; }
.search::placeholder { color: #b6bac2; font-style: italic; opacity: 1; }
.w26 { width: 26px; }
.user { gap: 5px; margin: 0 7px 0 2px; }
.user .caret { margin-left: -1px; }
.trial { width: 44px; height: 26px; gap: 4px; background: #6363fc; color: #fff; }
.autodesk { gap: 5px; margin: 0 9px 0 2px; }
.autodesk .caret { margin-left: 1px; }
.rule { width: 1px; height: 18px; background: #596070; }
.help { gap: 6px; margin-left: 9px; }
.qmark { font: bold 12px "Open Sans", sans-serif; fill: #444; }
.wincontrols { display: flex; margin-left: 20px; padding-right: 3px; }
.wincontrols button { width: 46px; height: 30px; }

/* menus */
.menubar { flex: none; display: flex; align-items: center; gap: 25px; height: 19px; padding: 0 0 1px 17px; color: #b9bcc2; border-bottom: 1px solid #3b4453; }
.doccontrols { display: flex; gap: 20px; margin-left: auto; padding-right: 13px; }
.ribbontabs { flex: none; display: flex; align-items: flex-end; height: 24px; padding-left: 7px; color: #b9bcc2; }
.ribbontabs button { height: 20px; padding: 0 11px 2px 10px; }
.ribbontabs .on { padding: 0 9px 2px; background: #3b4453; color: #fff; }
.minimize { display: flex; align-items: center; gap: 4px; height: 17px; margin-left: 19px; }

/* ribbon */
.ribbon { flex: none; display: flex; height: 99px; margin: 0 4px; background: #3b4453; font-size: 12px; }
.panel { flex: none; display: flex; flex-direction: column; border-right: 1px solid #222831; }
.draw { width: 231px; padding-left: 1px; }
.constr { width: 171px; }
.detail { width: 99px; }
.modify { width: 129px; }
.layers { width: 213px; }
.annot { width: 111px; }
.body { flex: 1; display: flex; padding-top: 5px; }
.name { display: flex; align-items: center; justify-content: center; gap: 6px; height: 20px; padding-bottom: 1px; }
.big { position: relative; flex-direction: column; justify-content: flex-start; height: 72px; padding-top: 2px; line-height: 15px; text-align: center; }
.big svg { margin-bottom: 2px; }
.big .caret { margin-top: 3px; }
.big .side { position: absolute; right: 3px; top: 50px; }
.w36 { width: 36px; }
.w44 { width: 44px; }
.w48 { width: 48px; }
.w56 { width: 56px; }
.w72 { width: 72px; }
.w74 { width: 74px; }
.w86 { width: 86px; }
.grid1, .grid2, .grid6 { display: grid; grid-auto-rows: 24px; align-items: center; justify-items: center; }
.grid1 { grid-template-columns: 24px; }
.grid2 { grid-template-columns: 24px 10px; }
.constr .big:first-child { width: 42px; }
.constr .grid2 { margin-left: 4px; }
.grid6 { grid-template-columns: 28px 8px 30px 22px 12px 28px; }
.grid6 button { width: 18px; }
.push { margin-left: 3px; }
.tiny { font: bold 8px "Open Sans", sans-serif; fill: #ddd; }
.layerstack { flex: 1; display: flex; flex-direction: column; padding: 0 2px; }
.layerrow { display: flex; align-items: center; justify-content: space-between; height: 24px; padding: 0 1px 0 3px; }
.short { justify-content: flex-start; gap: 6px; height: 26px; }
.layerbox { display: flex; align-items: center; gap: 4px; height: 22px; padding: 0 2px 0 4px; background: #4c586c; border: 1px solid #2a313c; }
.swatch { width: 14px; height: 14px; margin: 0 1px; background: #fff; }
.fold { flex: none; flex-direction: column; width: 59px; height: 97px; margin: 1px 2px 0 0; padding: 2px 0 5px; background: #4e5a6d; line-height: 16px; border: 1px solid #2a313c; }
.fold svg { margin-bottom: 1px; }
.fold .caret { margin-top: auto; }

/* drawing and layout tabs */
.filetabs { flex: none; display: flex; align-items: flex-end; height: 27px; font-size: 12px; }
.filetabs .burger { padding-bottom: 1px; }
.burger { flex-direction: column; gap: 3px; width: 16px; height: 24px; margin: 0 8px 0 19px; }
.burger i, .burger2 i { width: 16px; height: 2px; background: #dcdcdc; }
.slash { width: 6px; height: 16px; margin: 4px 3px; background: linear-gradient(111deg, transparent 45%, #596272 46%, #596272 56%, transparent 57%); }
.ftab { height: 24px; padding-bottom: 2px; font-size: 11px; color: #fff; margin-left: 5px; }
.ftab.on { display: flex; align-items: center; gap: 8px; width: 106px; margin-left: 7px; padding-left: 17px; font-weight: 700; background: #3b4453; clip-path: polygon(9% 0, 100% 0, 91% 100%, 0 100%); }
.plus { width: 14px; height: 24px; background: linear-gradient(#e4e4e4, #e4e4e4) center / 14px 2px no-repeat, linear-gradient(#e4e4e4, #e4e4e4) center / 2px 14px no-repeat; }
.filetabs .plus { margin: 0 8px; }
.strip { flex: none; height: 4px; margin: 0 3px; background: #3b4453; }

/* model space */
.canvas { position: relative; flex: 1; min-height: 0; margin: 0 3px; overflow: hidden; }
.drawing { position: absolute; inset: 0; }
.dims text { font: 16px "Liberation Sans", Arial, sans-serif; fill: #f2f2f2; }
.dims .radius { font-size: 40px; fill: #fff; }
.dims .caption { font-size: 36px; fill: #fff; }
.viewlabel { position: absolute; left: 3px; top: 6px; display: flex; font-size: 12px; line-height: 16px; }
.viewcube { position: absolute; right: 11px; top: 9px; display: flex; flex-direction: column; align-items: center; gap: 14px; }
.compass { font: bold 14px "Liberation Sans", Arial, sans-serif; fill: #bcbdc0; text-anchor: middle; }
.cubetext { font: bold 8px "Open Sans", sans-serif; fill: #4e5666; text-anchor: middle; }
.wcs { gap: 5px; width: 47px; height: 17px; border-radius: 3px; background: #a9abb8; color: #686b78; font: 11px "Liberation Sans", Arial, sans-serif; }
.watermark { position: absolute; left: 1067px; bottom: -5px; color: #7c8086; white-space: nowrap; }
.watermark p { margin: 0; }
.wm1 { font-size: 19px; line-height: 24px; }
.wm2 { font-size: 14px; line-height: 22px; }
.cmdline { position: absolute; left: 295px; right: 296px; bottom: 1px; display: flex; align-items: center; height: 26px; background: #282d39; }
.cmdbox { flex: 1; display: flex; align-items: center; gap: 4px; height: 25px; padding: 0 3px 0 4px; background: #bdbec0; border-radius: 2px 0 0 2px; }
.cmdbox input { flex: 1; min-width: 0; font: italic 12px "DejaVu Sans Mono", monospace; color: #333; }
.cmdbox input::placeholder { color: #666; opacity: 1; }

.layoutbar { flex: none; display: flex; align-items: center; height: 32px; padding-bottom: 5px; }
.layoutbar .burger { margin-right: 8px; padding-bottom: 2px; }
.ltab { padding-bottom: 3px; color: #fff; font-size: 11px; }
.ltab.on { display: flex; justify-content: center; width: 70px; height: 24px; margin-right: 6px; font-weight: 700; background: #3b4453; clip-path: polygon(14% 0, 100% 0, 86% 100%, 0 100%); }
.layoutbar .slash { margin: 0 10px; }
.status { display: flex; align-items: center; gap: 2px; height: 24px; margin-left: auto; padding-right: 5px; }
.status button, .status .run, .s17 { height: 24px; background: #3b4453; }
.status .model { width: 47px; padding-right: 3px; font-size: 12px; }
.status .lit { background: #6190c4; }
.s22 { width: 22px; }
.s24 { width: 24px; }
.s30 { width: 30px; margin: 0 3px 0 2px; }
.s40 { width: 40px; gap: 7px; }
.s17 { display: flex; align-items: center; justify-content: center; width: 17px; margin-left: -2px; }
.run { display: flex; align-items: center; width: 104px; justify-content: space-around; }
.run.tight { width: 49px; }
.flush { margin-left: -2px; }
.burger2 { flex-direction: column; gap: 4px; }

/* taskbar */
.taskbar { flex: none; display: flex; height: 40px; background: linear-gradient(90deg, #cde6ee, #d0e2ec 55%, #d9dce9); color: #111; }
.start { width: 48px; }
.winsearch { display: flex; align-items: center; gap: 10px; width: 288px; margin-top: 1px; padding-left: 11px; background: #fff; border: 1px solid #c9ccce; border-right: 0; }
.winsearch input { flex: 1; min-width: 0; font-size: 14px; }
.winsearch input::placeholder { color: #444; opacity: 1; }
.apps { display: flex; }
.apps button { width: 50px; border-bottom: 2px solid transparent; border-top: 2px solid transparent; }
.apps button:first-child { padding-right: 2px; }
.apps .open { width: 40px; margin: 0 4px 0 5px; border-bottom-color: #0078d7; }
.apps .open.active { width: 48px; margin: 0; background: #edf4f8; }
.logo-big { font: bold 13px "Open Sans", sans-serif; fill: #fff; }
.logo-s { font: bold 6px "Open Sans", sans-serif; fill: #fff; }
.badge { font: 9px "Open Sans", sans-serif; fill: #fff; }
.tray { display: flex; align-items: center; margin-left: auto; padding-right: 5px; font-size: 12px; border-right: 1px solid #b9bfcb; }
.tray button { width: 24px; }
.tray .weather { width: auto; gap: 10px; margin-right: 18px; font-size: 13px; }
.weather svg { margin-right: -3px; }
.lang { margin: 0 12px 0 6px; }
.clock { text-align: center; font-size: 11px; line-height: 18px; }
.tray .notes { width: 48px; margin-right: 5px; }
```
